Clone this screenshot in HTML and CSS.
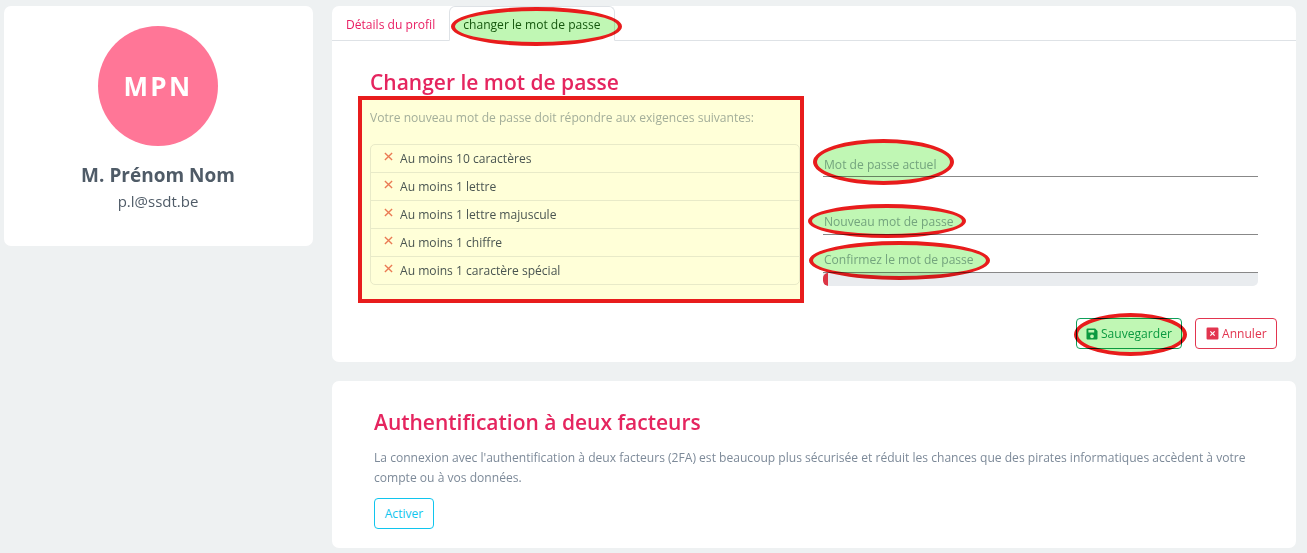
FILE: index.html
```html
<!DOCTYPE html>
<html lang="fr">
<head>
  <meta charset="UTF-8">
  <meta name="viewport" content="width=device-width, initial-scale=1">
  <title>Changer le mot de passe</title>
  <link rel="stylesheet" href="styles.css">
</head>
<body>
  <div class="page">
    <aside class="card profile">
      <div class="avatar">MPN</div>
      <h3 class="profile-name">M. Prénom Nom</h3>
      <p class="profile-mail">p.l@ssdt.be</p>
    </aside>

    <main class="content">
      <section class="card password-card">
        <nav class="tabs">
          <a class="tab">Détails du profil</a>
          <a class="tab active"><span class="mark mark-tab"></span>changer le mot de passe</a>
        </nav>

        <div class="password-body">
          <h2 class="title">Changer le mot de passe</h2>
          <div class="columns">
            <div class="rules">
              <span class="mark-box"></span>
              <p class="rules-intro">Votre nouveau mot de passe doit répondre aux exigences suivantes:</p>
              <ul class="rules-list">
                <li><svg class="cross" viewBox="0 0 10 10"><path d="M1 1l8 8M9 1l-8 8"/></svg>Au moins 10 caractères</li>
                <li><svg class="cross" viewBox="0 0 10 10"><path d="M1 1l8 8M9 1l-8 8"/></svg>Au moins 1 lettre</li>
                <li><svg class="cross" viewBox="0 0 10 10"><path d="M1 1l8 8M9 1l-8 8"/></svg>Au moins 1 lettre majuscule</li>
                <li><svg class="cross" viewBox="0 0 10 10"><path d="M1 1l8 8M9 1l-8 8"/></svg>Au moins 1 chiffre</li>
                <li><svg class="cross" viewBox="0 0 10 10"><path d="M1 1l8 8M9 1l-8 8"/></svg>Au moins 1 caractère spécial</li>
              </ul>
            </div>

            <div class="fields">
              <div class="field field-current"><span class="mark mark-current"></span>Mot de passe actuel</div>
              <div class="field field-new"><span class="mark mark-new"></span>Nouveau mot de passe</div>
              <div class="field field-confirm"><span class="mark mark-confirm"></span>Confirmez le mot de passe</div>
              <div class="strength"><div class="strength-bar"></div></div>
            </div>
          </div>

          <div class="actions">
            <button class="btn btn-save">
              <span class="mark mark-save"></span>
              <svg class="btn-icon" viewBox="0 0 12 12"><path fill-rule="evenodd" d="M1.5 0.5h7.6l2.4 2.4v7.6a1 1 0 0 1-1 1h-9a1 1 0 0 1-1-1v-9a1 1 0 0 1 1-1zM2.4 2v2.6h5.8V2zM6 6.4a1.9 1.9 0 1 0 0 3.8a1.9 1.9 0 0 0 0-3.8z"/></svg>
              Sauvegarder
            </button>
            <button class="btn btn-cancel">
              <svg class="btn-icon" viewBox="0 0 12 12"><path fill-rule="evenodd" d="M1.5 0.5h9a1 1 0 0 1 1 1v9a1 1 0 0 1-1 1h-9a1 1 0 0 1-1-1v-9a1 1 0 0 1 1-1zM4.4 3.6l-0.8 0.8L5.2 6L3.6 7.6l0.8 0.8L6 6.8l1.6 1.6l0.8-0.8L6.8 6l1.6-1.6l-0.8-0.8L6 5.2z"/></svg>
              Annuler
            </button>
          </div>
        </div>
      </section>

      <section class="card twofa-card">
        <h2 class="title twofa-title">Authentification à deux facteurs</h2>
        <p class="twofa-text">La connexion avec l'authentification à deux facteurs (2FA) est beaucoup plus sécurisée et réduit les chances que des pirates informatiques accèdent à votre compte ou à vos données.</p>
        <button class="btn btn-activate">Activer</button>
      </section>
    </main>
  </div>
</body>
</html>
```

FILE: styles.css
```css
* {
  margin: 0;
  padding: 0;
  box-sizing: border-box;
}

html, body {
  height: 100%;
  overflow: hidden;
}

body {
  font-family: "Open Sans", "Noto Sans", sans-serif;
  font-size: 12.08px;
  background: #eef1f2;
  color: #4a5560;
}

.page {
  display: grid;
  grid-template-columns: 309px 964px;
  column-gap: 19px;
  padding: 6px 0 0 4px;
  align-items: start;
}

.card {
  background: #fff;
  border-radius: 7px;
}

/* left column */
.profile {
  height: 240px;
  padding: 20px 1px 0 0;
  display: flex;
  flex-direction: column;
  align-items: center;
}

.avatar {
  width: 120px;
  height: 120px;
  border-radius: 50%;
  background: #ff7697;
  color: #fff;
  display: flex;
  align-items: center;
  justify-content: center;
  font-size: 26px;
  font-weight: 700;
  letter-spacing: 2.4px;
}

.profile-name {
  margin-top: 17px;
  font-size: 19px;
  line-height: 24px;
  font-weight: 700;
  color: #4f5b67;
}

.profile-mail {
  margin-top: 4px;
  font-size: 15px;
  line-height: 20px;
  color: #4f5b67;
}

/* tabs */
.content {
  display: flex;
  flex-direction: column;
  gap: 19px;
}

.password-card {
  height: 356px;
}

.tabs {
  display: flex;
  height: 35px;
  padding-left: 3px;
  border-bottom: 1px solid #dee2e6;
}

.tab {
  position: relative;
  display: block;
  height: 35px;
  padding: 11px 11px 0;
  line-height: 16px;
  color: #e91e63;
}

.tab.active {
  margin-left: 3px;
  width: 166px;
  padding-left: 13px;
  color: #1b5a12;
  background: #fff;
  border: 1px solid #dee2e6;
  border-bottom-color: #fff;
  border-radius: 6px 6px 0 0;
  padding-top: 10px;
}

/* annotations drawn over the page */
.mark {
  position: absolute;
  border: 4px solid #e81c1c;
  border-radius: 50%;
  background: #c0f7b4;
  mix-blend-mode: multiply;
  pointer-events: none;
}

.mark-tab {
  left: 1px;
  top: 0;
  width: 171px;
  height: 39px;
}

.mark-current {
  left: -10px;
  top: -16px;
  width: 141px;
  height: 46px;
}

.mark-new {
  left: -15px;
  top: -9px;
  width: 158px;
  height: 34px;
}

.mark-confirm {
  left: -14px;
  top: -10px;
  width: 181px;
  height: 39px;
}

.mark-save {
  left: -3px;
  top: -6px;
  width: 113px;
  height: 43px;
}

.mark-box {
  position: absolute;
  left: -12px;
  top: 0;
  width: 446px;
  height: 207px;
  border: 4px solid #e81c1c;
  background: #ffffd8;
  mix-blend-mode: multiply;
  pointer-events: none;
}

/* password form */
.password-body {
  padding: 0 19px 0 38px;
}

.title {
  font-size: 21px;
  line-height: 28px;
  font-weight: 600;
  color: #e5255f;
}

.password-body .title {
  margin-top: 27px;
}

.columns {
  display: grid;
  grid-template-columns: 430px 435px;
  column-gap: 23px;
}

.rules {
  position: relative;
  padding-top: 13px;
}

.rules-intro {
  line-height: 18px;
  color: #a3aeb6;
}

.rules-list {
  list-style: none;
  margin-top: 17px;
  border: 1px solid #e8eaec;
  border-radius: 5px;
}

.rules-list li {
  display: flex;
  align-items: center;
  height: 28px;
  padding-left: 13px;
  border-bottom: 1px solid #e8eaec;
}

.rules-list li:last-child {
  height: 27px;
  border-bottom: 0;
}

.cross {
  width: 9px;
  height: 9px;
  margin: -4px 7px 0 0;
  fill: none;
  stroke: #ea7a62;
  stroke-width: 1.5;
}

.fields {
  padding-top: 59px;
}

.field {
  position: relative;
  height: 22px;
  padding-left: 1px;
  line-height: 20px;
  color: #9aaab2;
  border-bottom: 1px solid #888;
}

.field-new {
  margin-top: 36px;
  line-height: 18px;
}

.field-confirm {
  margin-top: 16px;
  line-height: 18px;
}

.strength {
  height: 13px;
  background: #e9ecef;
  border-radius: 0 0 5px 5px;
  overflow: hidden;
}

.strength-bar {
  width: 5px;
  height: 100%;
  background: #dc3545;
  border-radius: 5px 0 0 5px;
}

/* buttons */
.actions {
  display: flex;
  justify-content: flex-end;
  gap: 13px;
  margin-top: 32px;
}

.btn {
  position: relative;
  display: inline-flex;
  align-items: center;
  height: 31px;
  background: #fff;
  border: 1px solid;
  border-radius: 4px;
  font-family: inherit;
  font-size: 12.08px;
}

.btn-icon {
  width: 12px;
  height: 12px;
  margin-right: 3px;
  fill: currentColor;
}

.btn-save {
  width: 106px;
  padding-left: 9px;
  color: #0e9f5a;
  border-color: #0e9f5a;
}

.btn-cancel {
  width: 82px;
  padding-left: 10px;
  color: #e2354f;
  border-color: #e2354f;
}

.btn-cancel .btn-icon {
  width: 13px;
  height: 13px;
}

/* second card */
.twofa-card {
  height: 167px;
  padding: 27px 42px 0;
}

.twofa-text {
  margin-top: 12px;
  line-height: 20px;
  color: #7d8a99;
}

.btn-activate {
  justify-content: center;
  width: 60px;
  margin-top: 10px;
  color: #10c5ee;
  border-color: #10c5ee;
}
```
